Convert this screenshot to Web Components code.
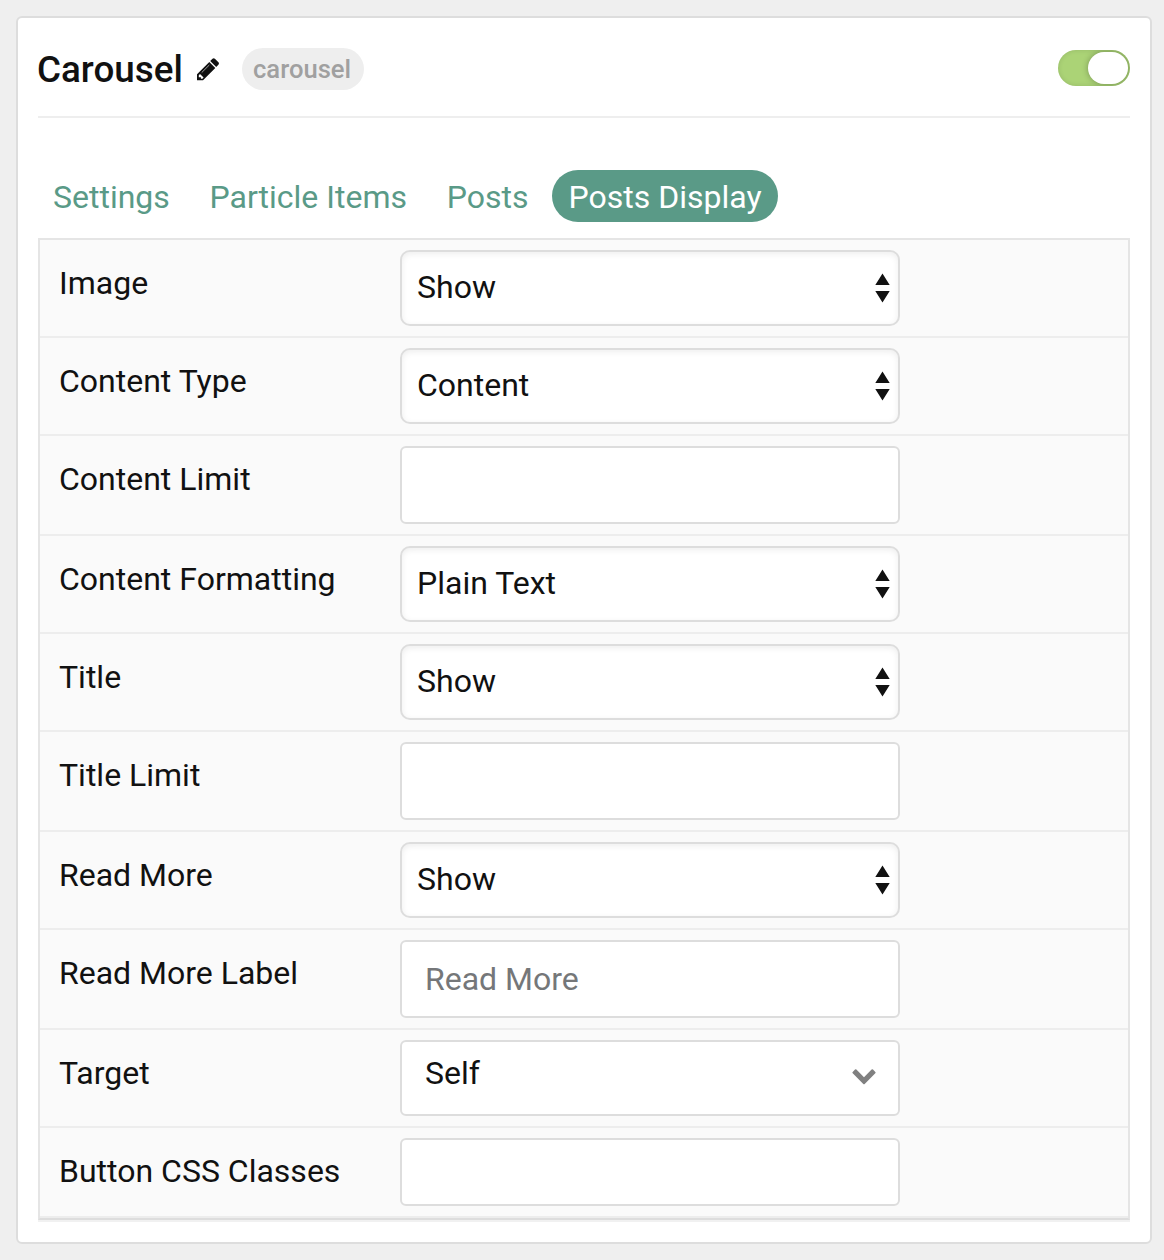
<!DOCTYPE html>
<html lang="en">
<head>
<meta charset="utf-8">
<title>Carousel</title>
<style>
html,body{margin:0;height:100%;background:#efefef}
body{font-family:Roboto,"Liberation Sans",sans-serif;font-size:32px;color:#111}
</style>
</head>
<body>
<particle-card>
  <card-header slot="header" name="Carousel" tag="carousel"></card-header>
  <tab-bar slot="tabs">
    <tab-item>Settings</tab-item>
    <tab-item>Particle Items</tab-item>
    <tab-item>Posts</tab-item>
    <tab-item active>Posts Display</tab-item>
  </tab-bar>
  <field-row label="Image"><select-box>Show</select-box></field-row>
  <field-row label="Content Type"><select-box>Content</select-box></field-row>
  <field-row label="Content Limit"><text-box></text-box></field-row>
  <field-row label="Content Formatting"><select-box>Plain Text</select-box></field-row>
  <field-row label="Title"><select-box>Show</select-box></field-row>
  <field-row label="Title Limit"><text-box></text-box></field-row>
  <field-row label="Read More"><select-box>Show</select-box></field-row>
  <field-row label="Read More Label"><text-box>Read More</text-box></field-row>
  <field-row label="Target"><dropdown-box>Self</dropdown-box></field-row>
  <field-row label="Button CSS Classes"><text-box style="--h:68px"></text-box></field-row>
</particle-card>
<script>
const define = (name, html, setup) => customElements.define(name, class extends HTMLElement {
  constructor() {
    super();
    this.attachShadow({mode: 'open'}).innerHTML = html;
  }
  connectedCallback() { if (setup) setup(this, this.shadowRoot); }
});

define('particle-card', `
<style>
:host{display:block;box-sizing:border-box;padding:16px 12px 16px 16px;height:1260px}
.card{box-sizing:border-box;height:1228px;border:2px solid #ddd;border-radius:6px;background:#fff;padding:0 20px}
.panel{border:2px solid #e5e5e5;border-bottom-color:#ddd;background:#fafafa;box-shadow:0 2px 0 #f1f1f1}
</style>
<div class="card"><slot name="header"></slot><slot name="tabs"></slot><div class="panel"><slot></slot></div></div>`);

define('card-header', `
<style>
:host{display:flex;align-items:center;box-sizing:border-box;height:100px;border-bottom:2px solid #eee;padding-top:4px}
h1{margin:0 0 0 -1px;padding-top:2px;width:145px;font-size:36.800px;font-weight:500;line-height:42px}
svg{display:block;margin-left:14px}
.tag{box-sizing:border-box;width:122px;height:42px;border-radius:21px;background:#eee;color:#a0a0a0;font-size:25.600px;font-weight:500;line-height:42px;padding:0 0 0 11px;margin-left:23px}
toggle-switch{margin-left:auto}
</style>
<h1></h1>
<svg width="23" height="23" viewBox="0 0 23 23"><path fill="#111" d="M1 16.200 13.300 3.900l6 6L7 22.200H1zM14.200 3l2.300-2.200q1.200-1.100 2.400 0l3.500 3.500q1.100 1.200 0 2.400L20.200 9z"/><path d="M2.800 17.200v2.100h2.100v1.500h1.500l1.200-1.200-3.600-3.600z" fill="#fff"/><path d="M5.700 14.600 13.300 7" stroke="#fff" stroke-width=".6"/></svg>
<span class="tag"></span><toggle-switch></toggle-switch>`, (el, root) => {
  root.querySelector('h1').textContent = el.getAttribute('name');
  root.querySelector('.tag').textContent = el.getAttribute('tag');
});

define('toggle-switch', `
<style>
:host{display:flex;justify-content:flex-end;box-sizing:border-box;width:72px;height:36px;padding:2px;border-radius:18px;background:#abd376;overflow:hidden;box-shadow:inset 0 0 5px rgba(0,0,0,.12);margin-bottom:2px}
i{width:40px;height:32px;border-radius:16px;background:#fff;box-shadow:0 0 6px rgba(0,0,0,.3)}
</style><i></i>`);

define('tab-bar', `
<style>:host{display:flex;gap:7.700px;padding:52px 0 16px;margin-left:-1px}</style><slot></slot>`);

define('tab-item', `
<style>
:host{display:block;height:52px;line-height:54px;padding:0 16px;border-radius:26px;color:#5a9a87;white-space:nowrap}
:host([active]){background:#5a9a87;color:#fff;padding:0 16px 0 16.500px}
</style><slot></slot>`);

define('field-row', `
<style>
:host{display:flex;align-items:flex-start;padding:10px 20px 10px 19px;border-bottom:2px solid #ededed}
label{width:341px;line-height:66px;white-space:nowrap;flex:none}
</style><label></label><slot></slot>`, (el, root) => {
  root.querySelector('label').textContent = el.getAttribute('label');
});

define('select-box', `
<style>
:host{display:flex;align-items:center;justify-content:space-between;box-sizing:border-box;width:500px;height:76px;border:2px solid #ddd;border-radius:10px;background:#fff;padding:0 8px 0 15px;box-shadow:inset 0 2px 6px rgba(0,0,0,.07)}
span{padding-bottom:2px}
</style><span><slot></slot></span>
<svg width="15" height="30" viewBox="0 0 15 30"><path fill="#111" d="M7.500.6 14.700 12H.3zM.3 18h14.400L7.500 29.400z"/></svg>`);

define('text-box', `
<style>
:host{display:flex;align-items:center;box-sizing:border-box;width:500px;height:var(--h,78px);border:2px solid #ddd;border-radius:6px;background:#fff;padding:0 23px;color:#757779}
</style><span><slot></slot></span>`);

define('dropdown-box', `
<style>
:host{display:flex;align-items:center;justify-content:space-between;box-sizing:border-box;width:500px;height:76px;border:2px solid #ddd;border-radius:6px;background:#fff;padding:0 22px 0 23px}
span{padding-bottom:10px}
svg{margin-bottom:2px}
</style><span><slot></slot></span>
<svg width="24" height="16" viewBox="0 0 24 16"><path d="M3 .6.700 2.900q-.7.700 0 1.400L11.300 14.900q.7.700 1.400 0L23.300 4.300q.7-.7 0-1.400L21 .6q-.7-.7-1.400 0L12 8.200 4.400.6q-.7-.7-1.400 0z" fill="#808080"/></svg>`);
</script>
</body>
</html>
